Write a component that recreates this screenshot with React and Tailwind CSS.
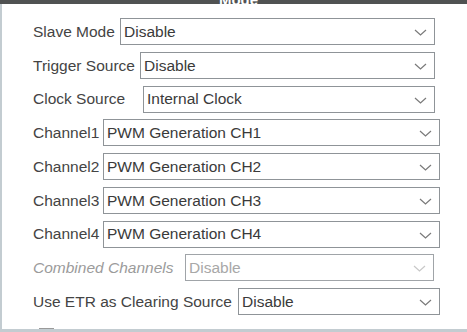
import React from "react";

const rows = [
    { label: "Slave Mode", value: "Disable", labelW: "w-[87px]", selW: "w-[315px]" },
    { label: "Trigger Source", value: "Disable", labelW: "w-[107px]", selW: "w-[295px]" },
    { label: "Clock Source", value: "Internal Clock", labelW: "w-[110px]", selW: "w-[292px]" },
    { label: "Channel1", value: "PWM Generation CH1", labelW: "w-[70px]", selW: "w-[337px]" },
    { label: "Channel2", value: "PWM Generation CH2", labelW: "w-[70px]", selW: "w-[337px]" },
    { label: "Channel3", value: "PWM Generation CH3", labelW: "w-[70px]", selW: "w-[337px]" },
    { label: "Channel4", value: "PWM Generation CH4", labelW: "w-[70px]", selW: "w-[337px]" },
    { label: "Combined Channels", value: "Disable", labelW: "w-[152px]", selW: "w-[249px]", disabled: true },
    { label: "Use ETR as Clearing Source", value: "Disable", labelW: "w-[205px]", selW: "w-[202px]" },
];

const Chevron = ({ disabled }) => (
    <svg width="13" height="7" viewBox="0 0 13 7" className="mr-[7px] mt-[2px] shrink-0">
        <polyline
            points="1,1 6.5,6 12,1"
            fill="none"
            stroke={disabled ? "#c8c8c8" : "#7a7a7a"}
            strokeWidth="1.2"
        />
    </svg>
);

const App = () => {
    return (
        <div
            className="w-[467px] h-[332px] overflow-hidden flex flex-col bg-white"
            style={{ fontFamily: '"Liberation Sans", Arial, sans-serif' }}
        >
            {/* title bar, mostly scrolled off */}
            <div className="h-[4px] shrink-0 bg-[#505252] overflow-hidden flex justify-center items-end">
                <span className="text-white text-[15px] font-bold leading-none mb-[-3px] pl-[10px]">Mode</span>
            </div>

            <div className="flex-1 flex border-l-2 border-[#c3ccd1] overflow-hidden">
                <div className="flex flex-col gap-[6.75px] pt-[14px] pl-[31px] text-[15.5px]">
                    {rows.map((row) => (
                        <div key={row.label} className="flex items-center h-[27px]">
                            <span
                                className={`${row.labelW} shrink-0 whitespace-nowrap ${
                                    row.disabled ? "italic text-[#9b9b9b]" : "text-[#444444]"
                                }`}
                            >
                                {row.label}
                            </span>
                            <div
                                className={`${row.selW} h-[27px] shrink-0 flex items-center justify-between border ${
                                    row.disabled ? "border-[#a0a4a8]" : "border-[#8f9498]"
                                }`}
                            >
                                <span
                                    className={`pl-[3px] whitespace-nowrap ${
                                        row.disabled ? "text-[#a8a8a8]" : "text-[#3a3a3a]"
                                    }`}
                                >
                                    {row.value}
                                </span>
                                <Chevron disabled={row.disabled} />
                            </div>
                        </div>
                    ))}
                    {/* checkbox row clipped by the panel bottom */}
                    <div className="pl-[6px] pt-[6px]">
                        <div className="w-[15px] h-[15px] border border-[#9a9a9a] bg-[#eeeeee]" />
                    </div>
                </div>
            </div>

            <div className="h-[3px] shrink-0 bg-[#c3ccd1]" />
        </div>
    );
};

export default App;
